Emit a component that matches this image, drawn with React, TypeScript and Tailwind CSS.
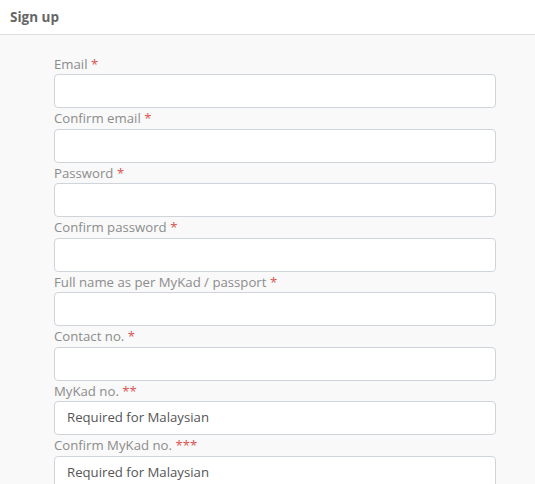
import React from "react";

const fields: { label: string; stars: string; placeholder?: string }[] = [
  { label: "Email", stars: "*" },
  { label: "Confirm email", stars: "*" },
  { label: "Password", stars: "*" },
  { label: "Confirm password", stars: "*" },
  { label: "Full name as per MyKad / passport", stars: "*" },
  { label: "Contact no.", stars: "*" },
  { label: "MyKad no.", stars: "**", placeholder: "Required for Malaysian" },
  { label: "Confirm MyKad no.", stars: "***", placeholder: "Required for Malaysian" },
];

export default function App() {
  return (
    <div
      className="w-[535px] h-[484px] overflow-hidden bg-[#f9f9f9]"
      style={{ fontFamily: '"Open Sans", "Noto Sans", sans-serif' }}
    >
      <div className="h-[35px] bg-white border-b border-[#dddddd] px-[10px] flex items-center">
        <span className="text-[13.5px] font-bold text-[#666666]">Sign up</span>
      </div>
      <div className="pl-[54px] pr-[39px] pt-[18.5px] flex flex-col">
        {fields.map((f) => (
          <div key={f.label} className="flex flex-col">
            <div className="h-[20.5px] leading-[20px] text-[13.2px] text-[#8c8c8c]">
              {f.label} <span className="text-[#d9534f]">{f.stars}</span>
            </div>
            <div className="h-[34px] bg-white border border-[#cfd4da] rounded-[4px] px-[12px] flex items-center text-[13.2px] text-[#555555]">
              {f.placeholder ?? ""}
            </div>
          </div>
        ))}
      </div>
    </div>
  );
}
